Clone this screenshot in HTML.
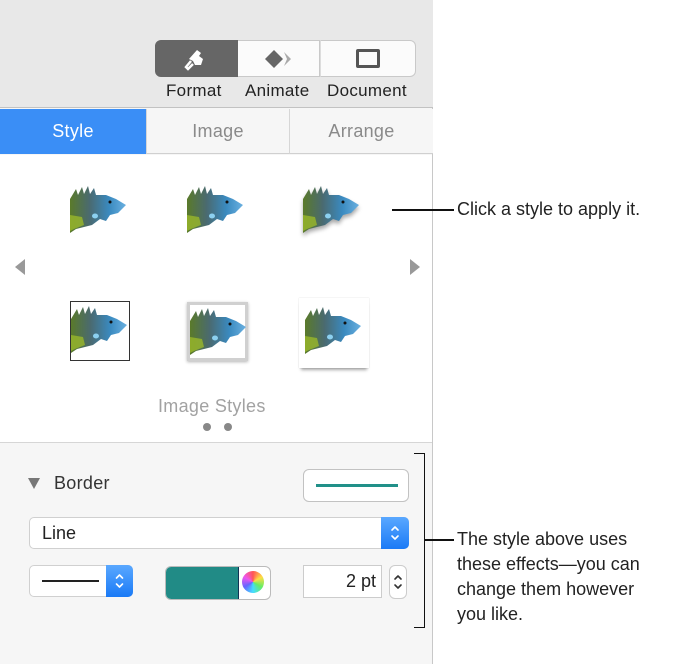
<!DOCTYPE html>
<html><head><style>
*{margin:0;padding:0;box-sizing:border-box}
body{width:680px;height:664px;background:#fff;font-family:"Liberation Sans",sans-serif;position:relative;overflow:hidden}
.a{position:absolute}
.panel{left:0;top:0;width:433px;height:664px;background:#f6f6f6;border-right:1px solid #c8c8c8}
.tb{left:0;top:0;width:433px;height:108px;background:#e8e8e8;border-bottom:1px solid #c2c2c2}
.seg{top:40px;height:37px;border:1px solid #c9c9c9;background:#fbfbfb}
.lbl{font-size:17px;color:#222;top:81px;letter-spacing:.3px}
.tab{top:109px;height:45px;font-size:18px;color:#8a8a8a;text-align:center;line-height:45px;background:#f6f6f6;border-bottom:1px solid #d0d0d0;letter-spacing:.3px}
.styles{left:0;top:155px;width:432px;height:288px;background:#fff;border-bottom:1px solid #d6d6d6}
.ig{width:58px;height:52px}
.note{font-size:18px;color:#222;line-height:25px}
.chev{position:absolute;background:linear-gradient(#5aa8ff,#1a7af6)}
</style></head><body>
<svg width="0" height="0" style="position:absolute"><defs>
<linearGradient id="g" x1="0" x2="1" y1="0" y2="0"><stop offset="0" stop-color="#5a7a2a"/><stop offset=".35" stop-color="#4a6a70"/><stop offset=".7" stop-color="#3a8ac0"/><stop offset="1" stop-color="#6ab0e0"/></linearGradient>
<symbol id="igu" viewBox="0 0 58 52"><path d="M0 14 L6 4 L8 10 L12 2 L14 9 L18 1 L20 9 L24 3 L26 10 L36 10 L46 14 L56 20 L52 24 L48 28 L40 30 L36 36 L30 34 L22 40 L14 42 L6 44 L0 48 Z" fill="url(#g)"/><path d="M0 30 L12 32 L14 40 L4 44 L0 46Z" fill="#9ab82a" opacity=".8"/><circle cx="40" cy="17" r="1.5" fill="#111"/><ellipse cx="25" cy="31" rx="3" ry="2.5" fill="#8cd0f0"/></symbol>
<symbol id="ud" viewBox="0 0 10 20"><path d="M2 7 L5 4 L8 7 M2 13 L5 16 L8 13" stroke="currentColor" stroke-width="1.6" fill="none" stroke-linecap="round" stroke-linejoin="round"/></symbol>
</defs></svg>
<div class="a panel"></div>
<div class="a tb"></div>
<div class="a seg" style="left:155px;width:83px;background:#666;border-color:#666;border-radius:6px 0 0 6px"></div>
<div class="a seg" style="left:238px;width:82px;border-left:none"></div>
<div class="a seg" style="left:320px;width:96px;border-left:1px solid #ddd;border-radius:0 6px 6px 0"></div>
<svg class="a" style="left:183px;top:47px" width="24" height="24" viewBox="0 0 24 24"><path d="M6 12 L14 3 L18 6 L16 9 L20 12 L18 18 L12 18 L10 14 Z" fill="#fff"/><path d="M8 14 L3 20 L5 22 L10 17" stroke="#fff" stroke-width="2.5" fill="none"/></svg>
<svg class="a" style="left:264px;top:50px" width="32" height="18" viewBox="0 0 32 18"><path d="M10 0 L19 9 L10 18 L1 9Z" fill="#666"/><path d="M20 2 L27 9 L20 16 L23 9Z" fill="#aaa"/></svg>
<div class="a" style="left:356px;top:49px;width:24px;height:19px;border:3px solid #555;border-radius:2px"></div>
<div class="a lbl" style="left:166px">Format</div>
<div class="a lbl" style="left:245px">Animate</div>
<div class="a lbl" style="left:327px">Document</div>
<div class="a tab" style="left:0;width:146px;background:#3a8ef6;color:#fff;border-bottom-color:#3a8ef6">Style</div>
<div class="a tab" style="left:146px;width:143px;border-left:1px solid #d6d6d6">Image</div>
<div class="a tab" style="left:289px;width:144px;border-left:1px solid #d6d6d6">Arrange</div>
<div class="a styles"></div>
<svg class="a ig" style="left:70px;top:185px"><use href="#igu"/></svg>
<svg class="a ig" style="left:187px;top:185px"><use href="#igu"/></svg>
<svg class="a ig" style="left:303px;top:185px;filter:drop-shadow(0 3px 2px rgba(0,0,0,.35))"><use href="#igu"/></svg>
<div class="a" style="left:70px;top:301px;width:60px;height:60px;border:1.5px solid #333;background:#fff"><svg class="ig" style="margin:3px 0 0 0"><use href="#igu"/></svg></div>
<div class="a" style="left:187px;top:302px;width:61px;height:59px;border:3px solid #d0d0d0;box-shadow:0 1px 3px rgba(0,0,0,.3);background:#fff"><svg class="ig" style="margin:2px 0 0 0"><use href="#igu"/></svg></div>
<div class="a" style="left:299px;top:298px;width:70px;height:70px;background:#fff;box-shadow:0 4px 3px -2px rgba(0,0,0,.35),0 0 1px #ccc"><svg class="ig" style="margin:8px 0 0 6px"><use href="#igu"/></svg></div>
<div class="a" style="left:15px;top:259px;border-right:10px solid #999;border-top:8px solid transparent;border-bottom:8px solid transparent"></div>
<div class="a" style="left:410px;top:259px;border-left:10px solid #999;border-top:8px solid transparent;border-bottom:8px solid transparent"></div>
<div class="a" style="left:158px;top:396px;font-size:18px;color:#a2a2a2;letter-spacing:.3px">Image Styles</div>
<div class="a" style="left:203px;top:423px;width:8px;height:8px;border-radius:50%;background:#888"></div>
<div class="a" style="left:224px;top:423px;width:8px;height:8px;border-radius:50%;background:#888"></div>
<div class="a" style="left:28px;top:478px;border-top:11px solid #777;border-left:6.5px solid transparent;border-right:6.5px solid transparent"></div>
<div class="a" style="left:54px;top:473px;font-size:18px;color:#333;letter-spacing:.3px">Border</div>
<div class="a" style="left:303px;top:469px;width:106px;height:33px;background:#fff;border:1px solid #c2c2c2;border-radius:6px"><div style="margin:14px 0 0 12px;width:82px;height:3px;background:#219089"></div></div>
<div class="a" style="left:29px;top:517px;width:380px;height:32px;background:#fff;border:1px solid #d0d0d0;border-radius:5px;font-size:18px;line-height:30px;padding-left:12px;color:#222">Line</div>
<div class="chev" style="left:381px;top:517px;width:28px;height:32px;border-radius:0 5px 5px 0;color:#fff"><svg width="28" height="32" viewBox="-9 -6 28 32" style="display:block"><use href="#ud" width="10" height="20"/></svg></div>
<div class="a" style="left:29px;top:565px;width:104px;height:32px;background:#fff;border:1px solid #d0d0d0;border-radius:5px"><div style="margin:14px 0 0 12px;width:57px;height:2px;background:#222"></div></div>
<div class="chev" style="left:106px;top:565px;width:27px;height:32px;border-radius:0 5px 5px 0;color:#fff"><svg width="27" height="32" viewBox="-8.5 -6 27 32" style="display:block"><use href="#ud" width="10" height="20"/></svg></div>
<div class="a" style="left:165px;top:566px;width:106px;height:34px;background:#fff;border:1px solid #bbb;border-radius:6px;overflow:hidden"><div style="width:73px;height:34px;background:#218b86;border-right:1px solid #135"></div></div>
<div class="a" style="left:242px;top:571px;width:22px;height:22px;border-radius:50%;background:conic-gradient(#f55,#fd4,#6e6,#4df,#66f,#e5e,#f55)"></div>
<div class="a" style="left:303px;top:565px;width:79px;height:33px;background:#fff;border:1px solid #ccc;font-size:18px;text-align:right;padding-right:5px;line-height:31px;color:#222">2 pt</div>
<div class="a" style="left:389px;top:565px;width:18px;height:34px;background:#fff;border:1px solid #ccc;border-radius:6px;color:#333"><svg width="16" height="32" viewBox="-3 -6 16 32" style="display:block"><use href="#ud" width="10" height="20"/></svg></div>
<div class="a" style="left:392px;top:209px;width:62px;height:1.5px;background:#111"></div>
<div class="a note" style="left:457px;top:197px">Click a style to apply it.</div>
<div class="a" style="left:414px;top:453px;width:11px;height:175px;border:1.5px solid #111;border-left:none"></div>
<div class="a" style="left:425px;top:539px;width:29px;height:1.5px;background:#111"></div>
<div class="a note" style="left:457px;top:527px">The style above uses<br>these effects—you can<br>change them however<br>you like.</div>
</body></html>
